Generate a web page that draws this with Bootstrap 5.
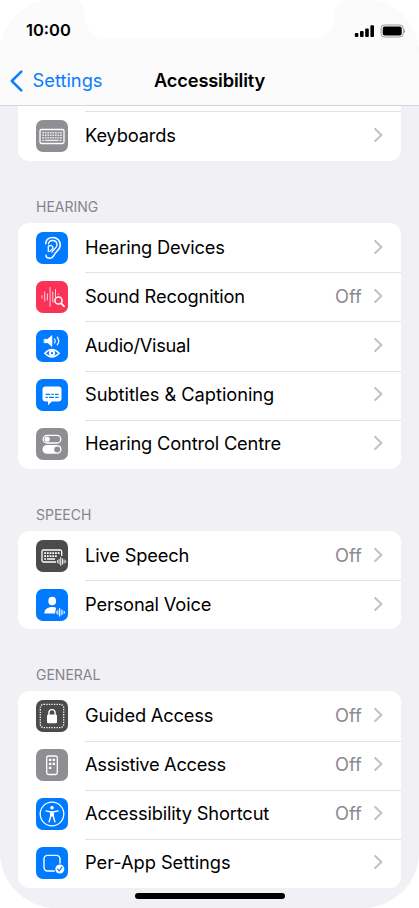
<!DOCTYPE html>
<html lang="en">
<head>
<meta charset="utf-8">
<meta name="viewport" content="width=device-width, initial-scale=1">
<title>Accessibility</title>
<link href="https://cdn.jsdelivr.net/npm/bootstrap@5.3.0/dist/css/bootstrap.min.css" rel="stylesheet">
<style>
body{background:#fff;font-family:Inter,"Liberation Sans",sans-serif;color:#000;overflow:hidden}
.phone{width:419px;height:908px;background:#f0f0f5;border-radius:54px 54px 56px 56px}
.topbar{height:106px;background:#fbfbfb;border-bottom:1px solid #d5d5da}
.notch{left:0;top:0}
.status{height:60px;padding:1px 14px 0 26px}
.clock{font-size:16.5px;font-weight:600;letter-spacing:0;line-height:1}
.titles{height:45px;display:grid;grid-template-columns:1fr auto 1fr;padding:0 10px;margin-top:-2px}
.back{color:#0a7cff;font-size:18.3px;letter-spacing:0;gap:9.5px}
.heading{font-size:18.3px;font-weight:600;letter-spacing:-.18px;margin:0}
.group{margin:0 18px;background:#fff;border-radius:11px;overflow:hidden}
.group.cut{border-radius:0 0 11px 11px;height:55px}
.item{height:49.2px;padding-left:18px}
.group.cut .item{margin-top:5px;height:50px}
.tile{width:32px;height:32px;border-radius:7px;flex:none}
.tile svg{display:block}
.blue{background:#007aff}.red{background:#fc3158}.gray{background:#8e8e93}.dark{background:#4b4b4d}
.body-cell{margin-left:17px;padding:0 18px 1.6px 0;height:100%;font-size:18.3px;letter-spacing:-.17px;line-height:1}
.item + .item .body-cell,.cut .body-cell{border-top:1px solid #e2e2e5}
.item + .item .body-cell,.cut .body-cell{padding-bottom:3px}
.roomy{letter-spacing:-.05px}
.tight{letter-spacing:-.3px}
.off{color:#8a8a8e;margin-right:12px;letter-spacing:.1px}
.caption{height:62px;padding:39px 36px 0;font-size:14px;letter-spacing:0;color:#85858b;line-height:14px}
.caption.later{padding-top:38.500px}
.homebar{left:135px;top:893px;width:150px;height:6px;border-radius:3px;background:#000}
</style>
</head>
<body>
<svg width="0" height="0" class="position-absolute">
  <symbol id="chev" viewBox="0 0 9 14"><path d="M1.2 1 7.4 7 1.2 13" fill="none" stroke="#c2c2c5" stroke-width="2" stroke-linecap="round" stroke-linejoin="round"/></symbol>
  <symbol id="wave" viewBox="0 0 10 10"><path d="M.7 4v2M2.4 2.8v4.4M4.1 1v8M5.8 2.2v5.6M7.5 3.3v3.4M9.2 4.3v1.4" stroke="#fff" stroke-width=".95" stroke-linecap="round"/></symbol>
</svg>
<div class="phone position-relative overflow-hidden">
  <header class="topbar">
    <svg class="notch position-absolute" width="419" height="40"><path d="M73 0Q84 1 84 12C84 29 92 38 108 38H311C327 38 335 29 335 12Q335 1 346 0Z" fill="#fff"/></svg>
    <div class="status position-relative d-flex align-items-center justify-content-between">
      <span class="clock">10:00</span>
      <svg width="52" height="14" viewBox="0 0 52 14"><g fill="#000"><rect x="1.8" y="9" width="3.6" height="4" rx="1"/><rect x="7" y="7" width="3.6" height="6" rx="1"/><rect x="12.2" y="4.4" width="3.6" height="8.600" rx="1"/><rect x="17.4" y="1.2" width="3.6" height="11.8" rx="1"/><rect x="29.7" y="2.6" width="19" height="8.8" rx="2"/></g><rect x="28" y="1" width="22.3" height="12" rx="3.5" fill="none" stroke="#999"/><path d="M51.2 5q1.8 2 0 4z" fill="#888"/></svg>
    </div>
    <div class="titles align-items-center">
      <a class="back d-flex align-items-center text-decoration-none" href="#"><svg width="13" height="22" viewBox="0 0 13 22"><path d="M11.3 1.7 1.8 11l9.500 9.300" fill="none" stroke="#0a7cff" stroke-width="2.5" stroke-linecap="round" stroke-linejoin="round"/></svg>Settings</a>
      <h1 class="heading">Accessibility</h1><span></span>
    </div>
  </header>
  <main>
    <section class="group cut">
      <div class="item d-flex align-items-center"><span class="tile gray"><svg width="32" height="32" viewBox="0 0 32 32"><rect x="4" y="9.5" width="24" height="14" rx="1.5" fill="none" stroke="#fff" stroke-width="1.3"/><path d="M6.3 12.7h19.5M6.3 15.2h19.5M6.3 17.7h19.5" stroke="#fff" stroke-width="1.5" stroke-dasharray="1.7 .84" opacity=".8"/><path d="M6.3 20.4h2m1 0h13.2m1 0h2" stroke="#fff" stroke-width="1.4" opacity=".85"/></svg></span>
        <div class="body-cell d-flex flex-grow-1 align-items-center"><span class="me-auto">Keyboards</span><svg width="9" height="14"><use href="#chev"/></svg></div></div>
    </section>

    <h2 class="caption m-0 fw-normal">HEARING</h2>
    <section class="group">
      <div class="item d-flex align-items-center"><span class="tile blue"><svg width="32" height="32" viewBox="0 0 32 32" fill="none" stroke="#fff" stroke-width="1.5" stroke-linecap="round"><path d="M9.700 11.700C10 7.700 13 5.500 16.700 5.500c4.500 0 7.500 3.200 7.500 7.500 0 3.700-2.200 5.500-4.200 7.300-2 1.900-2.300 6-6.200 6-2.200 0-3.800-1.200-3.800-3"/><path d="M12.400 11.800c.5-2 2-3.300 4-3.300 2.800 0 4.600 2 4.600 4.500 0 3.300-4 4.500-5 7.200M12.200 14.400c1.700-1.500 4.800-1 4.800 1.300 0 1.700-1.700 1.800-3.200 3.700M12.300 14.600v4.800" stroke-width="1.3"/></svg></span>
        <div class="body-cell d-flex flex-grow-1 align-items-center"><span class="me-auto">Hearing Devices</span><svg width="9" height="14"><use href="#chev"/></svg></div></div>
      <div class="item d-flex align-items-center"><span class="tile red"><svg width="32" height="32" viewBox="0 0 32 32" fill="none" stroke="#fff" stroke-linecap="round"><path d="M6 14.700v2.500M8.700 11v9M11.400 13v6M14.100 6.500v19M16.800 11v10M19.500 8.500v7.500M22.300 13v.5" stroke-width="1" opacity=".8"/><circle cx="22.500" cy="19.500" r="3.600" stroke-width="1.500"/><path d="m25.200 22.300 2.900 3" stroke-width="1.800"/></svg></span>
        <div class="body-cell d-flex flex-grow-1 align-items-center"><span class="me-auto">Sound Recognition</span><span class="off">Off</span><svg width="9" height="14"><use href="#chev"/></svg></div></div>
      <div class="item d-flex align-items-center"><span class="tile blue"><svg width="32" height="32" viewBox="0 0 32 32" fill="none" stroke="#fff" stroke-linecap="round"><path d="M8.400 9.300h3.200l4.300-3.700v10.800l-4.300-3.700H8.400z" fill="#fff" stroke-width=".7"/><path d="M18.600 9q1.500 2 0 4M21.200 7.200q3 3.800 0 7.600" stroke-width="1.200"/><path d="M8.800 23.300Q16 15.800 23.200 23.300 16 30.700 8.800 23.300Z" stroke-width="1.400"/><circle cx="16" cy="23.200" r="3.100" fill="#fff" stroke="none"/><circle cx="16" cy="23.200" r="1.100" fill="#007aff" stroke="none"/></svg></span>
        <div class="body-cell d-flex flex-grow-1 align-items-center"><span class="me-auto tight">Audio/Visual</span><svg width="9" height="14"><use href="#chev"/></svg></div></div>
      <div class="item d-flex align-items-center"><span class="tile blue"><svg width="32" height="32" viewBox="0 0 32 32"><path d="M9.500 7.500h13a3 3 0 0 1 3 3v9a3 3 0 0 1-3 3H16l-4 3.800v-3.800H9.500a3 3 0 0 1-3-3v-9a3 3 0 0 1 3-3Z" fill="#fff"/><path d="M9.600 15.300h4.700m1.200 0h2.300m1.200 0h3.600M9.600 18.300h2.200m1.200 0h5m1.200 0h3.400" stroke="#007aff" stroke-width="1.200"/></svg></span>
        <div class="body-cell d-flex flex-grow-1 align-items-center"><span class="me-auto roomy">Subtitles &amp; Captioning</span><svg width="9" height="14"><use href="#chev"/></svg></div></div>
      <div class="item d-flex align-items-center"><span class="tile gray"><svg width="32" height="32" viewBox="0 0 32 32"><rect x="7.200" y="7.400" width="17.600" height="7.600" rx="3.800" fill="none" stroke="#fff" stroke-width="1.300"/><circle cx="11.200" cy="11.200" r="2.600" fill="#fff"/><rect x="6.500" y="17" width="19" height="8.800" rx="4.400" fill="#fff"/><circle cx="21.200" cy="21.400" r="3" fill="#8e8e93"/></svg></span>
        <div class="body-cell d-flex flex-grow-1 align-items-center"><span class="me-auto">Hearing Control Centre</span><svg width="9" height="14"><use href="#chev"/></svg></div></div>
    </section>

    <h2 class="caption m-0 fw-normal">SPEECH</h2>
    <section class="group">
      <div class="item d-flex align-items-center"><span class="tile dark"><svg width="32" height="32" viewBox="0 0 32 32"><path d="M20 22H7.500A1.500 1.500 0 0 1 6 20.500v-9A1.500 1.500 0 0 1 7.500 10h16.700a1.500 1.500 0 0 1 1.500 1.500V16" fill="none" stroke="#fff" stroke-width="1.300"/><path d="M8.200 13.200h15.600M8.200 16.100h13.200" stroke="#fff" stroke-width="1.700" stroke-dasharray="1.800 .9"/><path d="M8.200 19h1.800m1 0h8" stroke="#fff" stroke-width="1.500"/><use href="#wave" x="20.700" y="16.600" width="9.800" height="9.800"/></svg></span>
        <div class="body-cell d-flex flex-grow-1 align-items-center"><span class="me-auto">Live Speech</span><span class="off">Off</span><svg width="9" height="14"><use href="#chev"/></svg></div></div>
      <div class="item d-flex align-items-center"><span class="tile blue"><svg width="32" height="32" viewBox="0 0 32 32"><ellipse cx="16.200" cy="12" rx="3.900" ry="4.300" fill="#fff"/><path d="M8.300 24.600c0-4.300 3.500-6.500 7.900-6.500 1.800 0 3 .3 4 .9l-1.500 5.600Z" fill="#fff"/><use href="#wave" x="19.500" y="18.500" width="9.800" height="9.800"/></svg></span>
        <div class="body-cell d-flex flex-grow-1 align-items-center"><span class="me-auto">Personal Voice</span><svg width="9" height="14"><use href="#chev"/></svg></div></div>
    </section>

    <h2 class="caption later m-0 fw-normal">GENERAL</h2>
    <section class="group">
      <div class="item d-flex align-items-center"><span class="tile dark"><svg width="32" height="32" viewBox="0 0 32 32"><rect x="4.300" y="4.300" width="23.400" height="23.400" rx="3.500" fill="none" stroke="#fff" stroke-width="1.300" stroke-dasharray="1.300 1.250"/><rect x="11" y="14.600" width="10" height="8.600" rx="1.300" fill="#fff"/><path d="M12.900 15v-2.300a3.100 3.100 0 0 1 6.200 0V15" fill="none" stroke="#fff" stroke-width="1.400"/></svg></span>
        <div class="body-cell d-flex flex-grow-1 align-items-center"><span class="me-auto">Guided Access</span><span class="off">Off</span><svg width="9" height="14"><use href="#chev"/></svg></div></div>
      <div class="item d-flex align-items-center"><span class="tile gray"><svg width="32" height="32" viewBox="0 0 32 32"><rect x="10.700" y="7" width="10.600" height="18.500" rx="1.800" fill="none" stroke="#fff" stroke-width="1.300"/><path d="M12.900 9.700h2.400v2.400h-2.400zm3.700 0H19v2.400h-2.400zm-3.700 4h2.400v2.400h-2.400zm3.700 0H19v2.400h-2.400zm-3.700 4h2.400v2.400h-2.400z" fill="#fff"/></svg></span>
        <div class="body-cell d-flex flex-grow-1 align-items-center"><span class="me-auto tight">Assistive Access</span><span class="off">Off</span><svg width="9" height="14"><use href="#chev"/></svg></div></div>
      <div class="item d-flex align-items-center"><span class="tile blue"><svg width="32" height="32" viewBox="0 0 32 32"><circle cx="16" cy="16" r="11.800" fill="none" stroke="#fff" stroke-width="1.300"/><circle cx="16" cy="9.800" r="1.800" fill="#fff"/><path d="M10 12.900 14.800 14h2.400l4.800-1.100M14.800 14v4l-1.700 5.700M17.200 14v4l1.700 5.700" fill="none" stroke="#fff" stroke-width="1.400" stroke-linecap="round" stroke-linejoin="round"/><path d="M14.500 13.800h3v4.800h-3z" fill="#fff"/></svg></span>
        <div class="body-cell d-flex flex-grow-1 align-items-center"><span class="me-auto">Accessibility Shortcut</span><span class="off">Off</span><svg width="9" height="14"><use href="#chev"/></svg></div></div>
      <div class="item d-flex align-items-center"><span class="tile blue"><svg width="32" height="32" viewBox="0 0 32 32"><rect x="8" y="8.400" width="16" height="15.600" rx="3.500" fill="none" stroke="#fff" stroke-width="1.400"/><circle cx="23.800" cy="22" r="5.500" fill="#007aff"/><circle cx="23.800" cy="22" r="4.500" fill="#fff"/><path d="m21.700 22.100 1.500 1.800 2.700-3.700" fill="none" stroke="#007aff" stroke-width="1.200" stroke-linecap="round"/></svg></span>
        <div class="body-cell d-flex flex-grow-1 align-items-center"><span class="me-auto roomy">Per-App Settings</span><svg width="9" height="14"><use href="#chev"/></svg></div></div>
    </section>
  </main>
  <div class="homebar position-absolute"></div>
</div>
<script src="https://cdn.jsdelivr.net/npm/bootstrap@5.3.0/dist/js/bootstrap.bundle.min.js"></script>
</body>
</html>
